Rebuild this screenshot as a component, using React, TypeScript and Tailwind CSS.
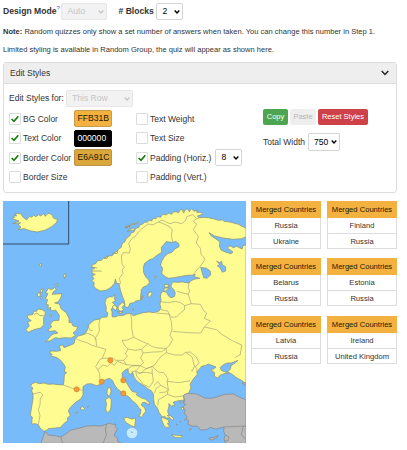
import React from "react";

type SelectProps = { value: string; className: string; disabled?: boolean };

function Select({ value, className, disabled }: SelectProps) {
  return (
    <div
      className={`flex shrink-0 items-center justify-between rounded-[2px] border pl-[5px] pr-[2px] text-[8.6px] ${
        disabled ? "border-[#e6e6e6] bg-[#f2f2f2] text-[#c6c6c6]" : "border-[#d5d5d5] bg-white text-black"
      } ${className}`}
    >
      <span>{value}</span>
      <svg width="6" height="4" viewBox="0 0 6 4" fill="none" stroke="currentColor" strokeWidth="1.4">
        <path d="M.7 .6 3 3 5.3 .6" />
      </svg>
    </div>
  );
}

function Check({ label, checked }: { label: string; checked?: boolean }) {
  return (
    <div className="flex items-center whitespace-nowrap">
      <span className="mr-[2px] flex h-[12px] w-[12px] items-center justify-center rounded-[1px] border border-[#dcdcdc] bg-white">
        {checked && (
          <svg width="8" height="8" viewBox="0 0 8 8" fill="none" stroke="#187c10" strokeWidth="1.7">
            <path d="M.6 4 3 6.3 7.3 1.3" />
          </svg>
        )}
      </span>
      {label}
    </div>
  );
}

function Swatch({ value, className }: { value: string; className: string }) {
  return (
    <span className={`flex h-[17px] w-[38px] items-center rounded-[2px] border pl-[2.5px] text-[8.6px] ${className}`}>
      {value}
    </span>
  );
}

function Group({ rows }: { rows: string[] }) {
  return (
    <div className="h-[48px] w-[70px] border border-[#dddddd] bg-white text-center text-[7.6px] whitespace-nowrap text-[#333]">
      <div className="-mx-px -mt-px h-[17px] bg-[#f3b13f] leading-[17px] text-[#1e1803]">Merged Countries</div>
      <div className="h-[15px] leading-[15px]">{rows[0]}</div>
      <div className="h-[16px] border-t border-[#dddddd] leading-[15px]">{rows[1]}</div>
    </div>
  );
}

const mainland =
  "M738 97L715 85 690 78 672 76 668 72 655 73 640 68 625 65 615 64 598 65 592 60 608 55 604 49 590 49 592 43 582 46 574 38 568 47 562 38 555 43 551 51 547 41 540 42 536 50 528 47 518 49 515 55 506 52 497 57 488 55 482 64 472 62 468 68 459 67 455 75 447 73 442 79 435 78 428 84 420 87 416 95 407 97 402 108 393 111 389 120 378 128 375 137 366 143 364 154 355 160 350 169 343 170 337 179 326 180 320 187 311 186 304 193 293 194 287 203 277 206 275 213 284 216 275 222 277 232 286 235 276 240 282 248 275 254 283 260 281 270 289 279 302 285 318 283 333 274 343 263 346 249 350 262 357 263 362 285 367 300 373 315 375 333 385 334 390 322 401 320 407 315 421 313 422 299 424 281 430 273 440 269 449 260 446 252 437 243 431 230 430 214 434 202 447 192 458 188 472 177 485 169 484 153 491 147 498 137 516 139 527 136 537 144 537 152 526 158 516 169 503 173 492 184 484 198 482 208 488 217 485 232 493 240 505 247 521 245 544 241 562 238 580 237 586 235 583 242 600 247 585 249 573 254 567 261 547 258 534 259 521 258 514 264 513 273 521 280 526 291 523 302 513 305 505 299 501 291 493 286 485 288 481 300 483 311 480 325 483 337 477 345 462 350 447 348 430 350 413 355 400 359 391 352 379 354 368 359 355 359 345 363 336 362 336 347 333 340 345 327 337 319 347 315 343 309 345 296 337 303 328 302 318 309 315 320 319 334 318 346 324 351 321 363 306 364 300 369 284 372 275 378 267 386 264 397 258 410 246 417 235 420 226 427 222 443 207 449 192 455 188 447 178 449 182 464 169 466 152 465 149 471 157 475 152 480 169 484 180 491 190 503 196 513 193 528 200 529 193 537 192 555 190 567 174 566 160 564 145 565 132 561 118 563 107 559 95 564 92 571 99 576 95 584 99 594 99 609 96 627 93 644 91 659 97 663 95 684 106 683 115 686 120 696 131 705 138 704 145 698 166 696 182 694 191 683 203 674 202 666 211 658 205 645 211 634 228 618 242 609 249 597 249 572 260 564 273 563 290 569 301 565 308 555 319 550 328 547 338 554 344 567 352 578 363 587 374 595 387 603 397 614 409 624 415 633 423 641 422 651 417 661 425 664 431 653 437 646 434 635 424 628 427 620 435 619 448 627 447 619 436 610 420 604 408 596 413 590 397 587 389 576 382 564 374 553 367 544 366 531 375 522 384 518 385 528 390 536 398 529 402 543 409 553 419 561 433 570 443 578 454 584 461 596 461 608 463 625 473 637 477 649 487 663 494 661 500 666 511 666 505 654 503 645 507 630 506 623 515 630 524 628 520 618 535 614 552 612 553 598 565 594 573 575 570 565 580 549 592 535 591 528 605 511 617 508 626 504 635 508 648 513 641 519 635 519 636 525 644 530 643 541 653 546 661 537 673 533 685 532 673 527 665 524 660 515 669 507 681 501 694 501 714 493 704 502 694 508 690 521 682 527 697 535 708 544 726 554 738 563Z";

const borders = [
  "M345 263L362 262 358 247 369 232 366 222 373 214 366 204 364 180 370 170 388 171 391 158 386 142 396 127 407 120 418 105 432 93 445 84 460 86 475 78 486 72 500 79 510 83 525 78 545 83 557 74 560 62 578 56 590 68 602 64",
  "M475 78L490 83 510 93 517 102 514 118 518 137",
  "M590 68L580 75 590 85 580 101 595 121 589 141 601 157 603 174 615 189 606 204 579 236",
  "M567 258L565 275 569 284 565 295 530 286M565 295L569 309 574 323 554 329 540 319 525 316 505 320 481 317M554 329L553 342 541 351 531 362 515 364 507 354 468 351M507 354L503 345 483 341M574 323L601 325 611 344 620 351 613 367 631 375 624 382 613 393",
  "M507 354L514 376 516 400 510 418 518 431 507 449 499 457 474 456 456 452 444 443 430 438 400 424 395 397 395 370 391 352M518 406L560 410 602 411 613 393 650 401 665 415 697 434 725 447 721 476 704 485",
  "M400 424L382 432 366 433 373 447 384 459 405 463 424 460 444 443M424 460L429 471 460 468 485 467 499 457M429 471L422 486 431 500 421 509 401 508 379 506 371 493 383 480 376 474 384 459",
  "M499 457L499 470 483 481 462 509 439 518 421 509M499 470L525 477 546 477 557 469 577 484 583 510 591 518 590 531M557 469L571 468 588 482 597 499 592 508 581 514 578 525 573 524",
  "M385 518L397 510 421 509M393 528L407 525 420 511M407 525L420 533 439 518 457 512 475 528 491 530 504 548 501 556 536 560 571 554M407 525L410 540 431 566 448 574M413 531L439 529 457 532 460 555 449 573M457 532L456 518M501 556L505 580 482 568 468 578 463 592M482 568L474 557 462 568M505 580L502 595 486 606 476 610 473 629M502 595L525 603 550 600 555 613M505 580L498 588 478 590",
  "M226 427L243 435 261 440 274 447 290 452 318 460 307 487 299 491 287 512 293 521 299 532 300 555 304 565M290 450L287 425 293 415 298 406 297 382 300 369M245 417L264 412 281 420 288 432M263 386L270 403 278 404",
  "M307 487L338 486 347 493 371 493M293 521L309 507 323 511 333 500 343 508 352 496 379 506",
  "M191 567L217 577 249 583M98 594L121 589 129 597 121 607 120 627 115 641 120 658 115 686",
];

const islands = [
  "M35 68L44 64 40 59 50 60 45 53 60 52 71 65 80 72 88 61 95 64 101 58 108 62 116 56 122 60 131 53 136 61 144 52 155 55 161 67 172 70 170 79 155 92 134 103 111 108 91 104 72 98 54 100 63 93 54 86 62 80 38 83 57 75Z",
  "M145 277L155 281 165 274 168 280 159 289 156 295 186 293 182 306 174 318 164 321 178 324 183 338 199 351 207 367 207 380 214 379 219 390 233 392 229 403 219 411 226 419 213 426 195 425 177 427 166 425 151 434 138 437 151 421 158 415 174 411 165 404 151 406 143 402 155 393 151 385 159 374 177 373 178 358 167 342 154 345 151 333 144 340 145 326 138 326 143 311 136 308 144 293 137 290Z",
  "M101 346L110 346 113 339 126 341 136 347 135 357 131 364 131 386 123 396 105 400 84 409 78 401 88 389 83 378 94 374 83 366 81 358 98 356Z",
  "M122 282L130 277 126 288 120 291ZM114 290L122 293 118 304 112 298ZM123 300L128 306 123 310ZM117 206L125 202 123 212ZM190 237L199 233 194 247ZM166 266L172 263 171 271ZM148 358L155 356 154 363Z",
  "M338 330L344 327 351 335 347 343 339 338ZM355 330L368 319 374 326 366 334 371 342 362 346 354 340ZM351 347L370 348 362 352Z",
  "M445 291L454 287 456 293 449 304 444 301ZM424 306L429 299 426 311ZM493 266L507 266 504 273 494 274ZM492 277L508 275 499 283 493 288ZM463 241L470 242 466 248ZM397 338L402 340 398 342Z",
  "M371 667L381 664 395 669 407 666 405 684 404 693 394 689 377 679Z",
  "M322 578L331 574 333 586 328 602 321 594ZM316 611L327 604 334 611 333 633 330 645 320 650 317 638 320 625Z",
  "M240 637L247 632 254 637 249 643ZM226 650L232 648 229 653ZM261 632L266 630 264 634Z",
  "M484 663L494 667 504 671 508 681 502 682 509 692 498 695 491 687 486 674Z",
  "M501 658L512 660 522 668 517 672ZM514 716L529 718 548 719 541 725 525 724ZM542 635L553 634 548 641ZM538 619L543 617 543 622ZM568 699L574 696 569 705ZM554 668L558 670 555 673ZM529 685L533 687ZM540 676L543 678Z",
  "M376 93L388 89 389 96ZM375 96L400 82 400 85ZM382 106L400 95 404 101ZM402 85L415 76 413 82ZM338 173L354 164 352 172ZM313 187L323 179 322 186Z",
];

const grey = [
  "M122 742L133 714 136 706 145 717 166 719 182 723 197 714 213 702 240 696 260 690 285 689 304 690 320 684 328 681 337 685 348 684 345 691 352 698 346 710 342 718 353 727 352 735 365 742Z",
  "M738 612L720 604 700 594 674 595 653 602 632 607 614 606 597 597 584 593 561 592 550 598 554 614 550 622 557 625 549 633 556 643 552 651 561 662 559 670 567 675 563 684 575 690 593 691 602 702 620 701 631 694 648 700 659 696 672 693 671 706 676 717 672 729 677 742 738 742Z",
  "M627 726L642 724 655 718 649 726 636 732 628 731ZM726 562L738 560 738 569Z",
];

const dots = [[331, 493], [305, 557], [230, 580], [370, 553], [370, 592]];

function EuropeMap() {
  return (
    <svg className="block h-[242px] w-[243px] shrink-0" viewBox="9 15 729 726" preserveAspectRatio="none">
      <rect x="9" y="15" width="729" height="726" fill="#78bbfa" />
      <g stroke="#8b8f70" strokeWidth="2.1" strokeLinejoin="round">
        <path d={mainland} fill="#fffd92" />
        {islands.map((d) => (
          <path key={d} d={d} fill="#fffd92" />
        ))}
        <g fill="#78bbfa">
          <path d="M627 110L644 120 670 126 700 130 725 128 740 122V146L729 149 726 159 710 151 700 155 690 149 682 156 699 168 693 173 678 169 663 162 658 150 660 138 648 129 635 121Z" />
          <path d="M602 214L620 217 631 226 632 237 621 247 611 245Z" />
          <path d="M650 195L658 200 665 196 667 207 677 212 677 225 667 229 661 216 652 210 659 205Z" />
          <path d="M555 608L571 605 586 612 582 620 562 622 550 619Z" />
        </g>
        {borders.map((d) => (
          <path key={d} d={d} fill="none" stroke="#a3a277" strokeWidth="2" />
        ))}
        <path d="M276 225H305M275 214L292 216" fill="none" />
        <path d="M102 355L111 351 120 359 131 358" fill="none" />
        {grey.map((d) => (
          <path key={d} d={d} fill="#b9b9b9" stroke="#858585" />
        ))}
        <path d="M182 723L188 742M320 684L316 700 319 718 309 742M672 693L691 692 738 690M677 717L687 723 683 735 674 735M730 690L724 716 738 731" fill="none" stroke="#858585" />
      </g>
      <path d="M9 144H206V15" fill="none" stroke="#304d69" strokeWidth="3" />
      {dots.map(([x, y]) => (
        <circle key={`${x}-${y}`} cx={x} cy={y} r="7.8" fill="#f79a31" stroke="#bd7931" strokeWidth="1.5" />
      ))}
      <circle cx="396" cy="711" r="16" fill="#c8eaff" />
      <path d="M393 707L398 709 396 711Z" fill="#fffd92" stroke="#7b9391" strokeWidth="1.5" />
    </svg>
  );
}

export default function App() {
  return (
    <div className="h-[450px] w-[407px] overflow-hidden bg-white pl-[3px] pt-[3px] font-['Liberation_Sans',Arial,sans-serif] text-[8.5px] leading-none text-[#333]">
      <div className="flex h-[17px] items-center whitespace-nowrap font-bold text-[8.6px]">
        <span>Design Mode</span>
        <sup className="top-[-4px] w-[5px] text-[6px] font-normal text-[#5555ee]">?</sup>
        <Select value="Auto" disabled className="h-[17px] w-[46px] font-normal" />
        <span className="ml-[11px] w-[38px]"># Blocks</span>
        <Select value="2" className="h-[17px] w-[27px] font-normal" />
      </div>
      <p className="mt-[8px] h-[8px] whitespace-nowrap text-[7.55px] leading-[8px]">
        <b>Note:</b> Random quizzes only show a set number of answers when taken. You can change this number in Step 1.
      </p>
      <p className="mt-[10px] h-[8px] whitespace-nowrap text-[7.55px] leading-[8px]">
        Limited styling is available in Random Group, the quiz will appear as shown here.
      </p>

      <section className="mt-[8px] h-[131px] w-[394px] rounded-[3px] border border-[#dddddd]">
        <header className="flex h-[21px] items-center justify-between border-b border-[#dddddd] bg-[#eeeeee] pl-[6px] pr-[7px]">
          <span>Edit Styles</span>
          <svg width="8" height="6" viewBox="0 0 8 6" fill="none" stroke="#222" strokeWidth="1.5">
            <path d="M.7 1 4 4.5 7.3 1" />
          </svg>
        </header>
        <div className="flex pl-[5px] pt-[6px]">
          <div className="w-[254px]">
            <div className="flex h-[17px] items-center">
              <span className="w-[57px] whitespace-nowrap">Edit Styles for:</span>
              <Select value="This Row" disabled className="h-[17px] w-[67px]" />
            </div>
            <div className="mt-[2px] grid grid-cols-[65px_62px_1fr] auto-rows-[19.5px] items-center">
              <Check label="BG Color" checked />
              <Swatch value="FFB31B" className="border-[#c99b4c] bg-[#f3b13f] text-[#1e1803]" />
              <Check label="Text Weight" />
              <Check label="Text Color" checked />
              <Swatch value="000000" className="border-black bg-black text-white" />
              <Check label="Text Size" />
              <Check label="Border Color" checked />
              <Swatch value="E6A91C" className="border-[#b9944a] bg-[#dca73a] text-[#1e1803]" />
              <div className="flex items-center gap-[4px]">
                <Check label="Padding (Horiz.)" checked />
                <Select value="8" className="h-[17px] w-[27px]" />
              </div>
              <Check label="Border Size" />
              <span />
              <Check label="Padding (Vert.)" />
            </div>
          </div>
          <div className="pt-[19px]">
            <div className="flex h-[16px] gap-[2px] text-center text-[7.5px] leading-[16px] whitespace-nowrap">
              <span className="w-[25px] rounded-[2px] bg-[#4ca64f] text-white">Copy</span>
              <span className="w-[26px] rounded-[2px] bg-[#eeeeee] text-[#b5b5b5]">Paste</span>
              <span className="w-[50px] rounded-[2px] bg-[#ce4148] text-white">Reset Styles</span>
            </div>
            <div className="mt-[8px] flex h-[18px] items-center">
              <span className="w-[45px] whitespace-nowrap">Total Width</span>
              <Select value="750" className="h-[18px] w-[32px]" />
            </div>
          </div>
        </div>
      </section>

      <div className="mt-[8px] flex items-start">
        <EuropeMap />
        <div className="ml-[5px] grid grid-cols-[70px_70px] gap-x-[6px] gap-y-[9.3px]">
          <Group rows={["Russia", "Ukraine"]} />
          <Group rows={["Finland", "Russia"]} />
          <Group rows={["Belarus", "Russia"]} />
          <Group rows={["Estonia", "Russia"]} />
          <Group rows={["Latvia", "Russia"]} />
          <Group rows={["Ireland", "United Kingdom"]} />
        </div>
      </div>
    </div>
  );
}
